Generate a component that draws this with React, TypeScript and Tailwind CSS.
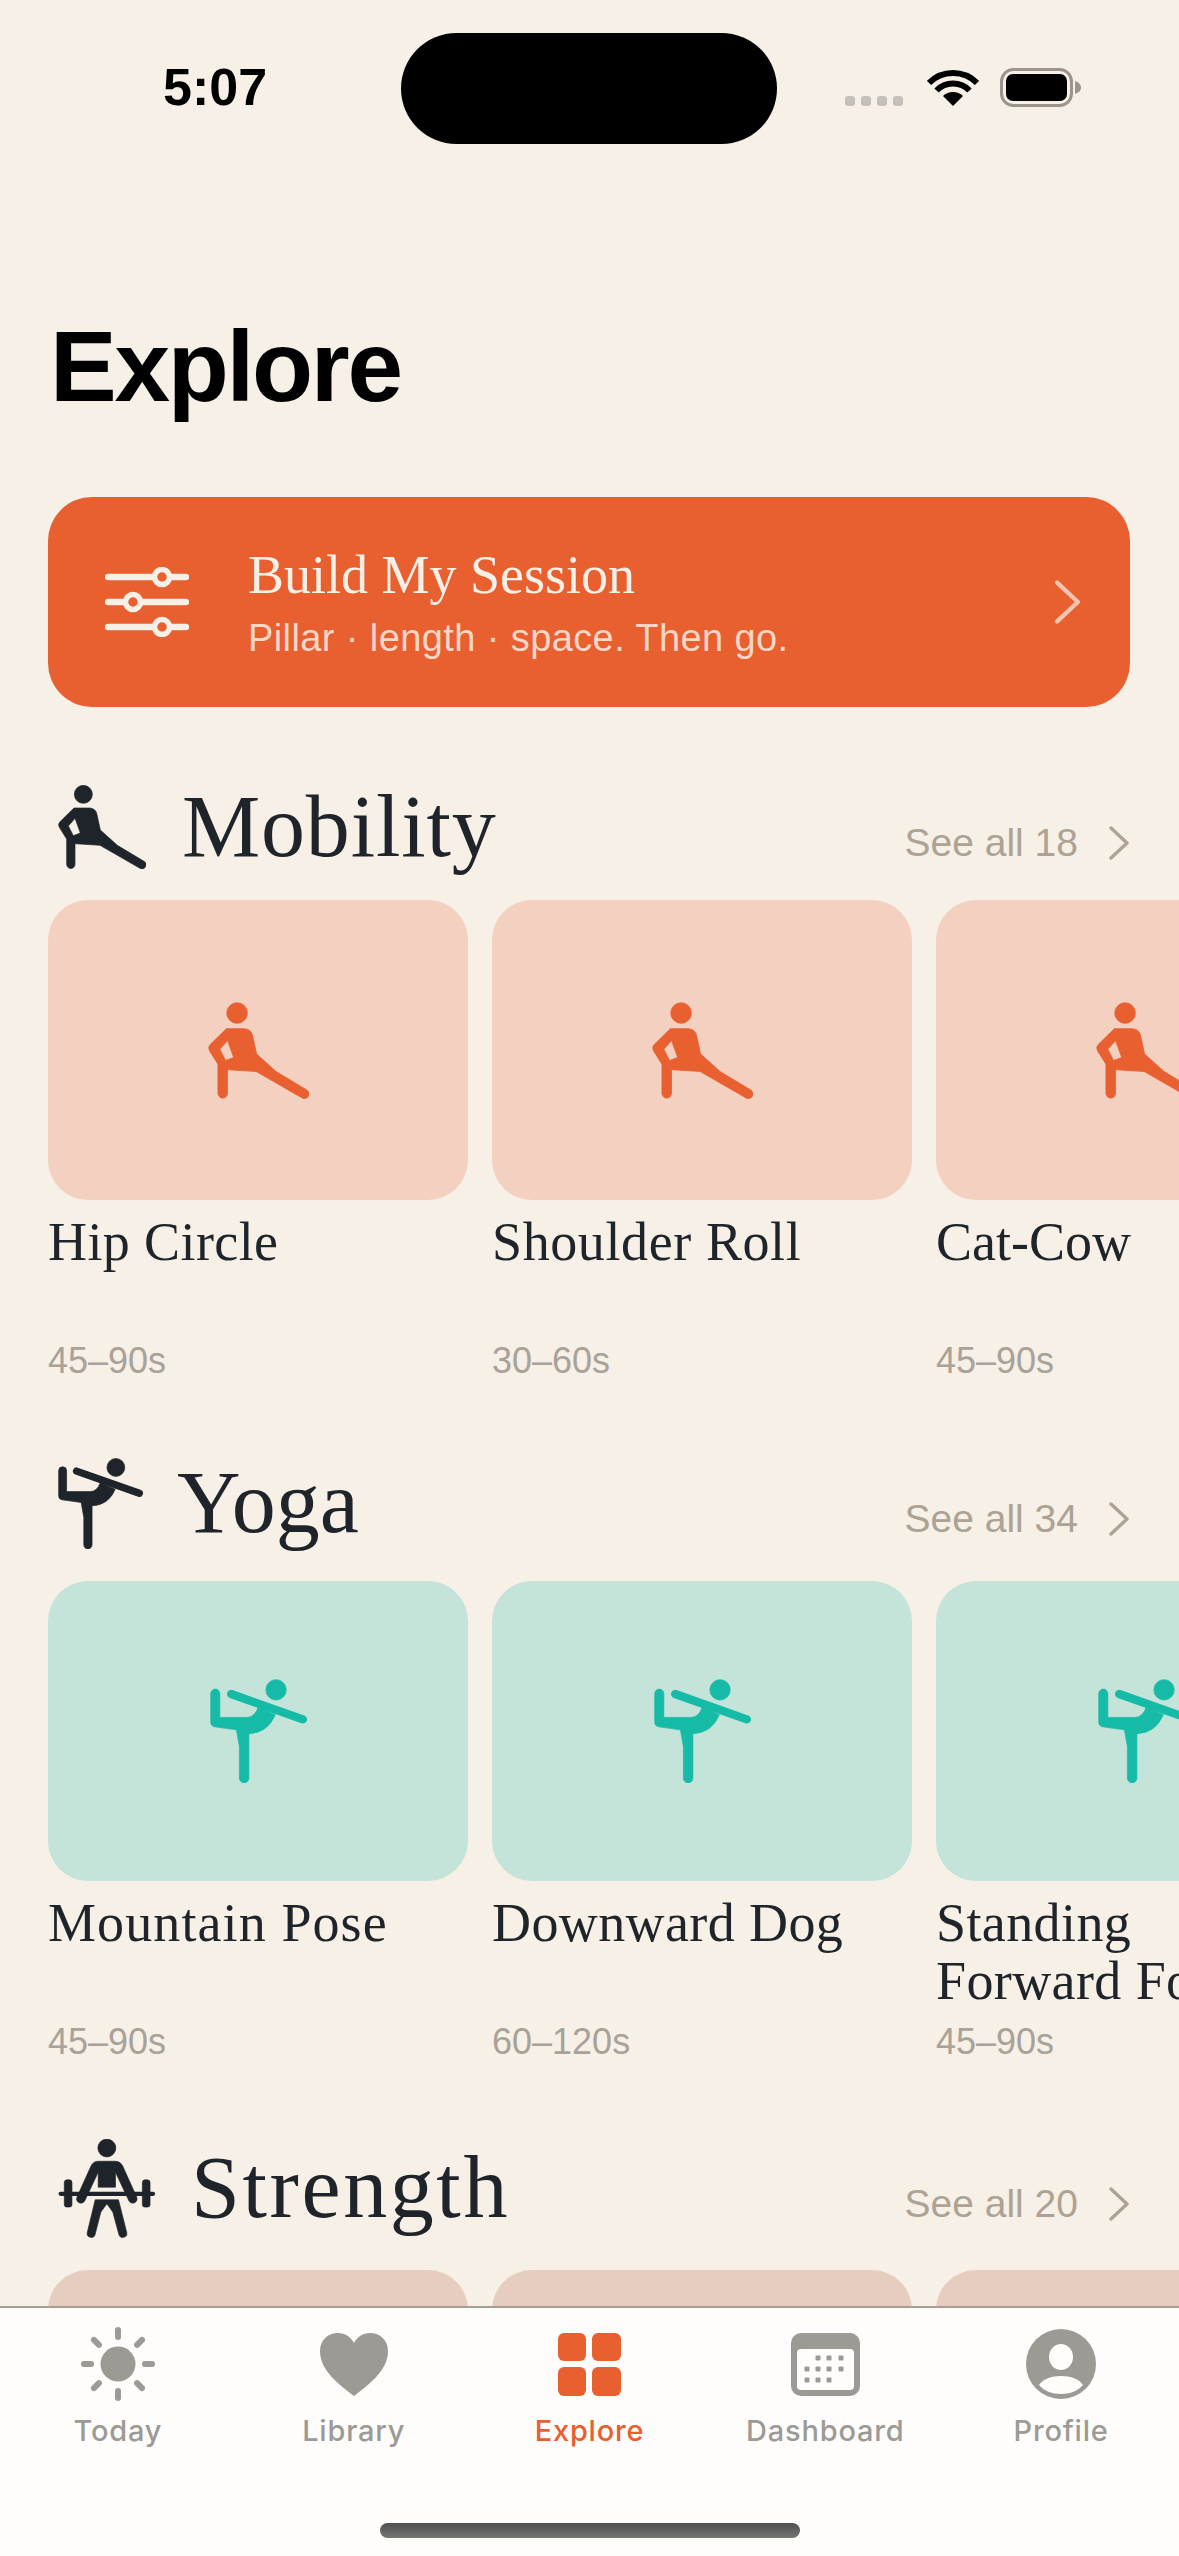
const serif = "font-['Liberation_Serif',serif]";
const sans = "font-['Liberation_Sans',sans-serif]";

function MobilityIcon({ className }: { className: string }) {
  return (
    <svg viewBox="84 43 264 252" className={className} fill="currentColor" stroke="currentColor" strokeWidth="2" strokeLinejoin="round">
      <circle cx="160" cy="71" r="27" />
      <path
        fillRule="evenodd"
        d="M132 112 L180 112 Q198 114 201 132 L211 178 L262 224 L342 272 a12 12 0 0 1 -12 21 L210 224 L135 219 L135 281 a12.5 12.5 0 0 1 -25 0 L110 205 L88 170 Q83 160 90 153 Z M115 166 L135 143 L151 187 L130 195 Z"
      />
    </svg>
  );
}

function YogaIcon({ className }: { className: string }) {
  return (
    <svg viewBox="52 56 257 274" className={className} fill="currentColor" stroke="currentColor" strokeWidth="2" strokeLinejoin="round">
      <circle cx="227" cy="84" r="27" />
      <path d="M108 95 L298 162" strokeWidth="22" strokeLinecap="round" />
      <path d="M54 94 a12 12 0 0 1 24 0 L78 157 L150 157 Q170 157 180 130 L225 150 Q205 198 155 200 L155 318 a12.5 12.5 0 0 1 -25 0 L130 235 L122 190 L65 182 Q54 180 54 170 Z" />
    </svg>
  );
}

function StrengthIcon({ className }: { className: string }) {
  return (
    <svg viewBox="54 30 293 298" className={className} fill="currentColor" stroke="currentColor" strokeWidth="2" strokeLinejoin="round">
      <circle cx="200" cy="57" r="27" />
      <path d="M175 97 L225 97 Q240 97 247 110 L290 205 a13 13 0 0 1 -24 10 L226 130 L226 175 L174 175 L174 130 L134 215 a13 13 0 0 1 -24 -10 L153 110 Q160 97 175 97 Z" />
      <path d="M165 213 L235 213 L260 312 a12 12 0 0 1 -24 4 L218 250 L200 225 L182 250 L165 316 a12 12 0 0 1 -24 -4 Z" />
      <path d="M61 195 L339 195" strokeWidth="13" strokeLinecap="round" />
      <rect x="72" y="153" width="23" height="82" rx="8" />
      <rect x="307" y="153" width="23" height="82" rx="8" />
    </svg>
  );
}

function Chevron({ className }: { className: string }) {
  return (
    <svg viewBox="0 0 20 34" className={className} fill="none" stroke="currentColor" strokeWidth="3.4" strokeLinecap="round" strokeLinejoin="round">
      <path d="M2 2 L18 17 L2 32" />
    </svg>
  );
}

function StatusBar() {
  return (
    <div className="flex items-start pl-[163px] pt-[33px] h-[144px]">
      <div className={`w-[238px] pt-[24px] text-[52px] leading-[60px] font-bold text-black ${sans}`}>5:07</div>
      <div className="w-[376px] h-[111px] rounded-[56px] bg-black" />
      <div className="flex items-center ml-[68px] pt-[35px]">
        <div className="flex gap-[6px] pt-[27px] w-[82px]">
          <span className="w-[10px] h-[10px] rounded-[3px] bg-[#c5c1ba]" />
          <span className="w-[10px] h-[10px] rounded-[3px] bg-[#c5c1ba]" />
          <span className="w-[10px] h-[10px] rounded-[3px] bg-[#c5c1ba]" />
          <span className="w-[10px] h-[10px] rounded-[3px] bg-[#c5c1ba]" />
        </div>
        <svg viewBox="0 0 52 37" className="w-[52px] h-[37px] mr-[21px]" fill="none" stroke="#000" strokeWidth="6">
          <path d="M2 14 A34 34 0 0 1 50 14" />
          <path d="M9.5 21.5 A23 23 0 0 1 42.500 21.500" />
          <path d="M26 37 L16 27 A14.500 14.500 0 0 1 36 27 Z" fill="#000" stroke="none" />
        </svg>
        <svg viewBox="0 0 81 39" className="w-[81px] h-[39px]">
          <rect x="1.500" y="1.500" width="70" height="36" rx="12" fill="none" stroke="#9a948c" strokeWidth="3" />
          <rect x="6" y="6" width="61" height="27" rx="7" fill="#000" />
          <path d="M75 13 Q81 15 81 19.500 Q81 24 75 26 Z" fill="#9a948c" />
        </svg>
      </div>
    </div>
  );
}

function BuildBanner() {
  return (
    <div className="mx-[48px] h-[210px] w-[1082px] rounded-[44px] bg-[#e85f30] flex items-center pl-[57px] pr-[49px]">
      <svg viewBox="0 0 84 70" className="w-[84px] h-[70px] mr-[59px] -mt-[1px] shrink-0 text-[#f6f0e7]" fill="none" stroke="currentColor" strokeWidth="6.500" strokeLinecap="round">
        <path d="M3 10 H47 M67 10 H81" />
        <circle cx="57" cy="10" r="7.500" strokeWidth="5.500" />
        <path d="M3 35 H18 M38 35 H81" />
        <circle cx="28" cy="35" r="7.500" strokeWidth="5.500" />
        <path d="M3 60 H47 M67 60 H81" />
        <circle cx="57" cy="60" r="7.500" strokeWidth="5.500" />
      </svg>
      <div className="flex-1">
        <div className={`text-[54px] leading-[62px] text-[#f6f0e7] ${serif}`}>Build My Session</div>
        <div className={`mt-[10px] text-[38px] leading-[44px] tracking-[0.4px] text-[#f9d6c6] ${sans}`}>Pillar · length · space. Then go.</div>
      </div>
      <Chevron className="w-[27px] h-[44px] text-[#f3c5b0]" />
    </div>
  );
}

type Item = { name: string; time: string; track?: string };

function Section({
  title,
  count,
  icon,
  items,
  cardClass,
  glyph,
  titleClass,
  rowClass,
  sectionClass,
}: {
  title: string;
  count: number;
  icon: React.ReactNode;
  items: Item[];
  cardClass: string;
  glyph?: React.ReactNode;
  titleClass: string;
  rowClass: string;
  sectionClass: string;
}) {
  return (
    <section className={sectionClass}>
      <div className="flex items-center h-[104px] pl-[58px] pr-[50px]">
        <div className="flex items-center flex-1">
          {icon}
          <h2 className={`text-[88px] leading-[104px] text-[#1e2429] ${serif} ${titleClass}`}>{title}</h2>
        </div>
        <span className={`text-[39px] leading-[44px] text-[#ada293] mt-[32px] mr-[31px] ${sans}`}>See all {count}</span>
        <Chevron className="w-[20px] h-[34px] mt-[32px] text-[#ada293]" />
      </div>
      <div className={`flex gap-[24px] pl-[48px] ${rowClass}`}>
        {items.map((item) => (
          <div key={item.name} className="w-[420px] shrink-0">
            <div className={`h-[300px] rounded-[40px] flex items-center justify-center ${cardClass}`}>{glyph}</div>
            <div className={`mt-[13px] h-[116px] text-[54px] leading-[58px] text-[#1e2429] whitespace-pre ${serif} ${item.track ?? "tracking-[0.4px]"}`}>{item.name}</div>
            <div className={`mt-[11px] text-[36px] leading-[42px] text-[#a8a299] ${sans}`}>{item.time}</div>
          </div>
        ))}
      </div>
    </section>
  );
}

function SunIcon() {
  const rays = [0, 45, 90, 135, 180, 225, 270, 315];
  return (
    <svg viewBox="0 0 76 76" className="w-[76px] h-[76px]" fill="#9c9a95">
      <circle cx="38" cy="38" r="17.500" />
      {rays.map((r) => (
        <rect key={r} x="35" y="1" width="6" height="13" rx="3" transform={`rotate(${r} 38 38)`} />
      ))}
    </svg>
  );
}

function HeartIcon() {
  return (
    <svg viewBox="0 0 68 63" className="w-[68px] h-[63px]" fill="#9c9a95">
      <path d="M34 63 C20 52 0 38 0 18 C0 7 8 0 18 0 C25 0 31 4 34 10 C37 4 43 0 50 0 C60 0 68 7 68 18 C68 38 48 52 34 63 Z" />
    </svg>
  );
}

function GridIcon() {
  return (
    <div className="grid grid-cols-2 gap-[6px] w-[63px] h-[63px]">
      <span className="rounded-[6px] bg-[#e85f30]" />
      <span className="rounded-[6px] bg-[#e85f30]" />
      <span className="rounded-[6px] bg-[#e85f30]" />
      <span className="rounded-[6px] bg-[#e85f30]" />
    </div>
  );
}

function CalendarIcon() {
  const dots = [
    [27, 25], [38, 25], [50, 25],
    [16, 36], [27, 36], [38, 36], [50, 36],
    [16, 47], [27, 47], [38, 47],
  ];
  return (
    <svg viewBox="0 0 69 63" className="w-[69px] h-[63px]">
      <rect width="69" height="63" rx="10" fill="#9c9a95" />
      <rect x="6" y="16" width="57" height="41" rx="4" fill="#fefdfb" />
      {dots.map(([x, y]) => (
        <rect key={`${x}-${y}`} x={x - 2.500} y={y - 2.500} width="5" height="5" rx="1" fill="#9c9a95" />
      ))}
    </svg>
  );
}

function ProfileIcon() {
  return (
    <svg viewBox="0 0 70 70" className="w-[70px] h-[70px]">
      <circle cx="35" cy="35" r="35" fill="#9c9a95" />
      <ellipse cx="35" cy="28" rx="12" ry="13" fill="#fefdfb" />
      <path d="M13 56 C17 50 25 47 35 47 C45 47 53 50 57 56 C52 62 44 65 35 65 C26 65 18 62 13 56 Z" fill="#fefdfb" />
    </svg>
  );
}

function Tab({ label, icon, active }: { label: string; icon: React.ReactNode; active?: boolean }) {
  return (
    <div className="flex flex-col items-center">
      <div className="h-[76px] flex items-center justify-center">{icon}</div>
      <span className={`mt-[10px] text-[29px] leading-[38px] font-medium tracking-[0.8px] font-['Inter',sans-serif] ${active ? "text-[#e85f30]" : "text-[#9c9a95]"}`}>
        {label}
      </span>
    </div>
  );
}

function TabBar() {
  return (
    <div className="h-[250px] shrink-0 bg-[#fefdfb] border-t-2 border-[#a79e94] relative z-10">
      <div className="grid grid-cols-5 pt-[18px]">
        <Tab label="Today" icon={<SunIcon />} />
        <Tab label="Library" icon={<HeartIcon />} />
        <Tab label="Explore" icon={<GridIcon />} active />
        <Tab label="Dashboard" icon={<CalendarIcon />} />
        <Tab label="Profile" icon={<ProfileIcon />} />
      </div>
      <div className="mx-auto mt-[73px] w-[420px] h-[15px] rounded-full bg-gradient-to-b from-[#505050] to-[#757575]" />
    </div>
  );
}

export default function App() {
  return (
    <div className="w-[1179px] h-[2556px] bg-[#f6f0e7] flex flex-col overflow-hidden">
      <div className="flex-1 overflow-hidden">
        <StatusBar />
        <h1 className={`mt-[162px] pl-[50px] text-[100px] leading-[120px] font-bold tracking-[-2.3px] text-black ${sans}`}>Explore</h1>
        <div className="mt-[71px]">
          <BuildBanner />
        </div>
        <Section
          title="Mobility"
          count={18}
          sectionClass="mt-[68px]"
          rowClass="mt-[21px]"
          titleClass="ml-[36px] tracking-[0.8px]"
          icon={<MobilityIcon className="w-[88px] h-[84px] text-[#1e2429]" />}
          cardClass="bg-[#f3d0c0] text-[#e85f30]"
          glyph={<MobilityIcon className="w-[101px] h-[97px]" />}
          items={[
            { name: "Hip Circle", time: "45–90s" },
            { name: "Shoulder Roll", time: "30–60s", track: "tracking-[0.6px]" },
            { name: "Cat-Cow", time: "45–90s", track: "tracking-[0px]" },
          ]}
        />
        <Section
          title="Yoga"
          count={34}
          sectionClass="mt-[69px]"
          rowClass="mt-[26px]"
          titleClass="ml-[34px]"
          icon={<YogaIcon className="w-[85px] h-[91px] text-[#1e2429]" />}
          cardClass="bg-[#c4e3d9] text-[#16bba8]"
          glyph={<YogaIcon className="w-[97px] h-[104px]" />}
          items={[
            { name: "Mountain Pose", time: "45–90s", track: "tracking-[1.1px]" },
            { name: "Downward Dog", time: "60–120s" },
            { name: "Standing\nForward Fold", time: "45–90s" },
          ]}
        />
        <Section
          title="Strength"
          count={20}
          sectionClass="mt-[73px]"
          rowClass="mt-[30px]"
          titleClass="ml-[35px] tracking-[2.6px]"
          icon={<StrengthIcon className="w-[98px] h-[99px] text-[#1e2429]" />}
          cardClass="bg-[#e7cdc0]"
          items={[
            { name: "Goblet Squat", time: "45–90s" },
            { name: "Push-Up", time: "45–90s" },
            { name: "Deadlift", time: "45–90s" },
          ]}
        />
      </div>
      <TabBar />
    </div>
  );
}
